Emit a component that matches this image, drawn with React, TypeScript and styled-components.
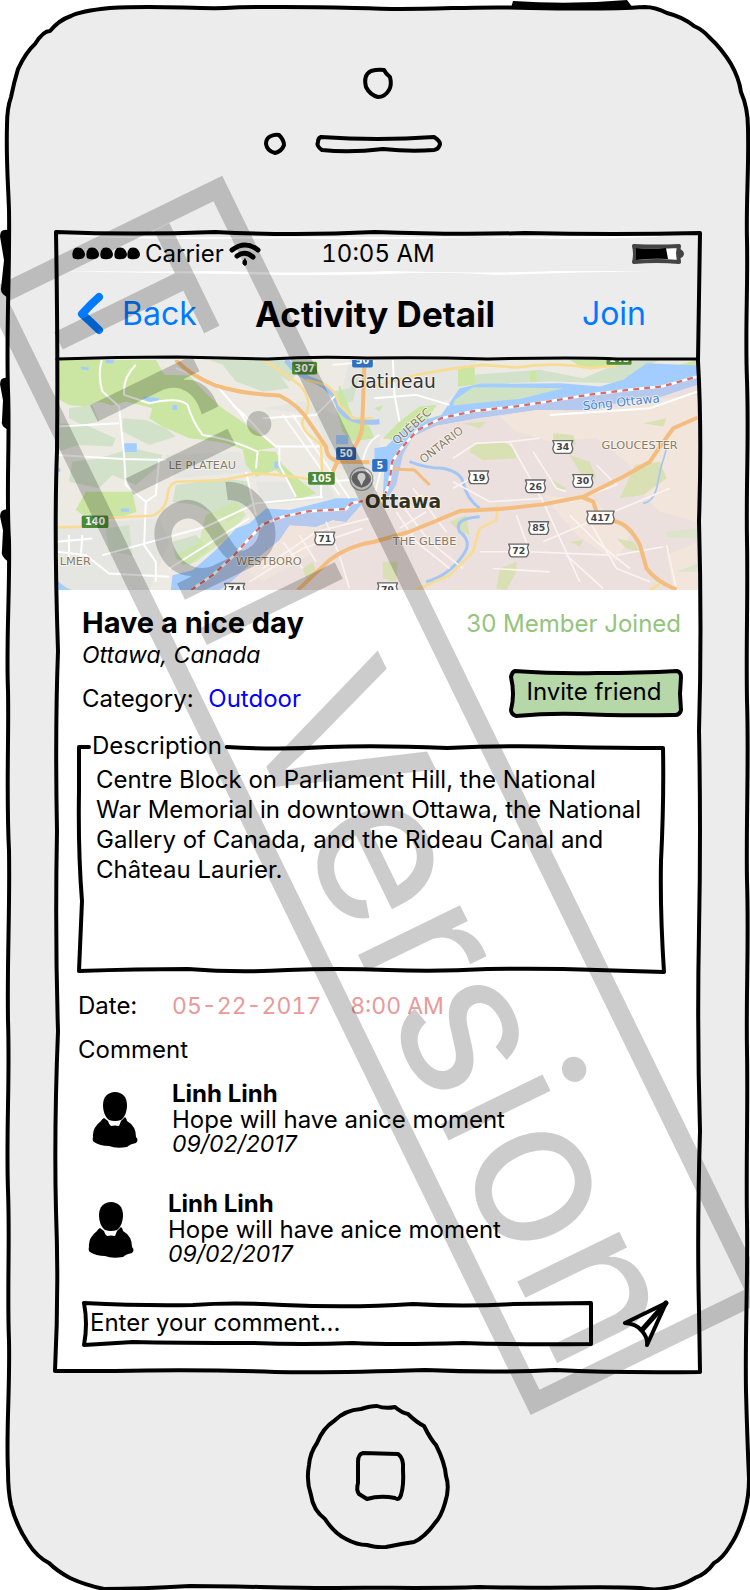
import React from "react";
import styled, { createGlobalStyle } from "styled-components";

const GlobalStyle = createGlobalStyle`
  *, *::before, *::after { box-sizing: border-box; }
  body {
    margin: 0;
    background: #fff;
    color: #000;
    font-family: Inter, "Liberation Sans", sans-serif;
    font-size: 24px;
    line-height: 30px;
  }
`;

/* ---------- sketch helpers ---------- */

const SketchSvg = styled.svg`
  position: absolute;
  inset: 0;
  width: 100%;
  height: 100%;
  overflow: visible;
  pointer-events: none;
`;

type SketchProps = { w: number; h: number; d: string; fill?: string; stroke?: number };

const Sketch = ({ w, h, d, fill = "none", stroke = 4 }: SketchProps) => (
  <SketchSvg viewBox={`0 0 ${w} ${h}`} preserveAspectRatio="none" aria-hidden="true">
    <path
      d={d}
      fill={fill}
      stroke="#000"
      strokeWidth={stroke}
      strokeLinejoin="round"
      strokeLinecap="round"
      vectorEffect="non-scaling-stroke"
    />
  </SketchSvg>
);

/* ---------- phone ---------- */

const Phone = styled.div`
  position: relative;
  isolation: isolate;
  overflow: hidden;
`;

const Shell = styled(SketchSvg)`
  z-index: -1;
`;

const Earpiece = styled.header`
  display: flex;
  justify-content: center;
  height: 231px;
`;

const Screen = styled.main`
  position: relative;
  margin: 0 50px 0 55px;
  padding: 2px;
`;

const HomeArea = styled.footer`
  display: flex;
  justify-content: center;
  padding: 30px 0 42px 6px;
`;

const HomeButton = styled.button`
  width: 146px;
  height: 146px;
  padding: 0;
  border: 0;
  background: none;
  svg { display: block; }
`;

/* ---------- bars ---------- */

const StatusBar = styled.div`
  position: relative;
  display: grid;
  grid-template-columns: 1fr auto 1fr;
  align-items: center;
  height: 42px;
  padding: 0 14px 0 15px;
  background: #ececec;
  font-variant-numeric: tabular-nums;
`;

const Signal = styled.div`
  display: flex;
  align-items: center;
  gap: 5px;
`;

const BatterySlot = styled.div`
  display: flex;
  justify-content: flex-end;
`;

const NavBar = styled.nav`
  position: relative;
  display: grid;
  grid-template-columns: 1fr auto 1fr;
  align-items: center;
  height: 85px;
  padding: 0 5px 7px 0;
  background: #ececec;
`;

const NavLink = styled.a<{ $end?: boolean }>`
  display: flex;
  align-items: center;
  gap: 17px;
  justify-self: ${(p) => (p.$end ? "end" : "start")};
  padding: ${(p) => (p.$end ? "0 47px 0 0" : "0 0 0 20px")};
  color: #007aff;
  font-size: 32px;
  line-height: 40px;
  text-decoration: none;
`;

const Title = styled.h1`
  margin: 0;
  font-size: 35px;
  line-height: 40px;
  font-weight: 700;
`;

/* ---------- content ---------- */

const MapPicture = styled.svg`
  display: block;
  width: 100%;
  height: 230px;
`;

const Body = styled.div`
  padding: 16px 15px 23px 21px;
  background: #fff;
`;

const Summary = styled.section`
  display: flex;
  justify-content: space-between;
  padding-left: 4px;
`;

const Name = styled.h2`
  margin: 0;
  font-size: 29px;
  line-height: 34px;
  font-weight: 700;
`;

const Place = styled.p`
  margin: 0 0 14px;
  font-size: 23px;
  font-style: italic;
`;

const Line = styled.p`
  margin: 0;
`;

const Category = styled.a`
  margin-left: 8px;
  color: #0000ff;
  text-decoration: none;
`;

const Side = styled.div`
  display: flex;
  flex-direction: column;
  align-items: flex-end;
`;

const Joined = styled.p`
  margin: 3px 2px 30px 0;
  color: #93c47d;
`;

const InviteButton = styled.button`
  position: relative;
  isolation: isolate;
  width: 174px;
  height: 48px;
  padding: 0 4px 3px 0;
  border: 0;
  background: none;
  color: #000;
  font: inherit;
  svg { z-index: -1; }
`;

const DescriptionFrame = styled.div`
  position: relative;
  height: 242px;
  margin: 14px 19px 0 0;
`;

const Description = styled.fieldset`
  min-width: 0;
  margin: 0;
  padding: 4px 22px 0 18px;
  border: 0;
`;

const Legend = styled.legend`
  margin-left: -4px;
  padding: 0;
`;

const DateRow = styled.dl`
  display: flex;
  gap: 29px;
  margin: 18px 0 0;
  font-variant-numeric: tabular-nums;
  dt { width: 65px; }
  dd { margin: 0; font-size: 23px; color: #ea9999; }
`;

const SectionTitle = styled.h3`
  margin: 14px 0 0;
  font-size: 24px;
  line-height: 30px;
  font-weight: 400;
`;

const Comments = styled.ul`
  display: flex;
  flex-direction: column;
  gap: 34px;
  margin: 16px 0 33px;
  padding: 0;
  list-style: none;
`;

const Comment = styled.li<{ $indent: number }>`
  display: flex;
  gap: 34px;
  padding-left: ${(p) => p.$indent}px;
  line-height: 25px;
`;

const Avatar = styled.svg`
  flex: none;
  width: 46px;
  height: 56px;
  margin-top: 11px;
`;

const Author = styled.div`
  line-height: 26px;
  font-weight: 700;
`;

const Stamp = styled.time`
  display: block;
  font-size: 23px;
  font-style: italic;
`;

const Composer = styled.form`
  display: flex;
  align-items: center;
  gap: 30px;
  padding: 0 14px 0 5px;
`;

const InputWrap = styled.div`
  position: relative;
  flex: 1;
`;

const CommentInput = styled.input`
  display: block;
  width: 100%;
  height: 44px;
  padding: 0 7px 3px;
  border: 0;
  outline: 0;
  background: transparent;
  color: #000;
  font: inherit;
  &::placeholder { color: #000; opacity: 1; }
`;

const SendButton = styled.button`
  width: 46px;
  height: 48px;
  padding: 0;
  border: 0;
  background: none;
  svg { display: block; }
`;

const Watermark = styled.svg`
  position: absolute;
  inset: 0;
  width: 100%;
  height: 100%;
  pointer-events: none;
`;

/* ---------- drawings ---------- */

const PhoneShell = () => (
  <Shell viewBox="0 0 750 1590" preserveAspectRatio="none" aria-hidden="true">
    <g fill="#000">
      <path d="M511 8 L513 1 Q570 5 627 0 L633 8Z" />
      <path d="M9 230 Q0 228 0 236 L4 260 L1 288 Q0 294 9 298Z" />
      <path d="M9 378 Q0 376 0 384 L3 400 L2 420 Q0 426 9 430Z" />
      <path d="M9 509 Q0 508 0 516 L3 530 L2 550 Q0 556 9 562Z" />
    </g>
    <path
      d="M110 8 C160 5 190 9 225 8 C290 5 340 8 400 9 C450 9 480 6 530 8 C580 9 615 9 645 7 Q655 7 667 13 Q683 17 694 26 Q703 30 709 37 Q722 49 731 64 Q739 78 741 92 Q748 108 748 128 C749 170 746 200 747 240 C748 290 745 330 747 380 C749 440 746 480 747 540 C748 600 746 640 747 700 C749 760 746 820 747 880 C749 940 746 990 747 1050 C748 1110 746 1160 747 1220 C748 1280 745 1330 746 1390 Q747 1430 749 1478 Q749 1495 745 1510 Q739 1532 730 1545 Q722 1558 714 1562 Q706 1573 695 1577 Q680 1586 667 1587 Q655 1590 640 1587 C600 1585 540 1588 480 1586 C420 1588 380 1586 330 1587 C280 1587 240 1585 190 1585 Q140 1588 104 1588 Q85 1584 70 1577 Q57 1570 49 1562 Q37 1556 28 1542 Q16 1524 11 1504 Q8 1490 8 1470 C6 1430 10 1390 9 1340 C7 1290 10 1240 8 1190 C6 1130 10 1080 8 1020 C7 960 10 910 9 850 C6 790 9 740 8 690 C6 640 10 590 9 540 C6 490 10 440 8 390 C6 330 10 270 9 210 C8 180 6 160 7 125 Q7 108 11 97 Q14 82 18 69 Q26 52 35 44 Q43 31 50 31 Q59 20 71 16 Q80 11 110 8Z"
      fill="#ececec"
      stroke="#000"
      strokeWidth="4"
      strokeLinejoin="round"
    />
  </Shell>
);

const StatusDots = () => (
  <svg width="68" height="14" viewBox="0 0 68 14" aria-hidden="true">
    {[0, 14, 28, 42, 55].map((x) => (
      <path key={x} d={`M${x + 3} 1 Q${x + 6} 0 ${x + 9} 1 Q${x + 13} 4 ${x + 13} 8 Q${x + 12} 12 ${x + 8} 12 Q${x + 4} 13 ${x + 1} 11 Q${x - 1} 5 ${x + 3} 1Z`} />
    ))}
  </svg>
);

const WifiIcon = () => (
  <svg width="32" height="24" viewBox="0 0 32 24" fill="none" stroke="#000" strokeLinecap="round" aria-hidden="true">
    <path d="M3 8 Q16 -2 29 8" strokeWidth="5" />
    <path d="M8 14 Q16 8 24 15" strokeWidth="5" />
    <path d="M16 17 Q19 20 17 23 Q15 24 14 22 Q13 19 16 17Z" fill="#000" strokeWidth="1" />
  </svg>
);

const BatteryIcon = () => (
  <svg width="52" height="20" viewBox="0 0 52 20" aria-hidden="true">
    <path d="M48 5 Q52 7 52 10 Q51 14 48 14Z" fill="#444" />
    <path d="M2 2 Q25 3 47 2 L46 9 L47 18 Q25 16 2 18 Q4 10 2 2Z" fill="#fff" stroke="#444" strokeWidth="4" strokeLinejoin="round" />
    <path d="M4 4 Q20 5 34 4 L36 15 Q20 14 4 16Z" />
  </svg>
);

const BackIcon = () => (
  <svg width="28" height="44" viewBox="0 0 28 44" fill="none" stroke="#007aff" strokeWidth="8" strokeLinecap="round" aria-hidden="true">
    <path d="M22 5 Q14 12 5 22 Q14 30 22 38" strokeLinejoin="round" />
  </svg>
);

const Person = () => (
  <Avatar viewBox="0 0 46 56" role="img" aria-label="Linh Linh">
    <path d="M23 0 C30 0 35 5 35 13 C35 19 33 25 29 28 Q23 30 17 28 C13 25 11 19 11 13 C11 5 16 0 23 0Z" />
    <path d="M12 26 L16 29 Q17 33 19 34 Q23 33 27 34 L29 29 L33 25 Q35 27 35 29 Q44 34 44 45 Q47 48 44 51 Q38 52 35 55 Q24 57 17 54 Q8 54 2 50 Q0 49 1 45 Q0 36 9 29 Q10 27 12 26Z" />
  </Avatar>
);

const PaperPlane = () => (
  <svg width="46" height="48" viewBox="0 0 46 48" fill="none" stroke="#000" strokeWidth="4" strokeLinejoin="round" strokeLinecap="round" aria-hidden="true">
    <path d="M43 3 L2 23 Q14 24 19 31 Q25 38 24 45 L43 3Z" />
    <path d="M43 3 L19 30" strokeWidth="5" />
  </svg>
);

const Shield = ({ x, y, w = 60, children }: { x: number; y: number; w?: number; children: string }) => (
  <g>
    <path d={`M${x} ${y} h${w} l-4 10 l4 14 q-3 14 -10 14 h${20 - w} q-7 0 -10 -14 l4 -14Z`} fill="#fff" stroke="#666" strokeWidth="4" />
    <text x={x + w / 2} y={y + 29} textAnchor="middle" fontSize="28" fontWeight="700" fill="#444">{children}</text>
  </g>
);

const Plate = ({ x, y, w, fill, children }: { x: number; y: number; w: number; fill: string; children: string }) => (
  <g>
    <rect x={x} y={y} width={w} height="38" rx="5" fill={fill} />
    <text x={x + w / 2} y={y + 29} textAnchor="middle" fontSize="29" fontWeight="700" fill="#fff">{children}</text>
  </g>
);

const OttawaMap = () => (
  <MapPicture
    viewBox="24 15 1920 690"
    preserveAspectRatio="xMidYMid slice"
    role="img"
    aria-label="Map of Ottawa"
    fontFamily='"DejaVu Sans", sans-serif'
    strokeLinejoin="round"
  >
    <rect x="0" y="0" width="1980" height="720" fill="#edeae3" />
    {/* built-up ground */}
    <g fill="#e5e5e2">
      <path d="M640 160 L800 180 L850 330 L990 400 L990 15 L900 15 L860 180 L760 140Z" />
      <path d="M24 520 L180 500 L330 490 L360 560 L300 705 L24 705Z" />
      <path d="M350 300 L570 290 L610 350 L380 370Z" />
      <path d="M970 15 L1280 15 L1270 80 L1100 200 L970 260Z" />
      <path d="M620 380 L830 380 L860 430 L640 450Z" />
    </g>
    {/* light woods */}
    <g fill="#d2e2ca">
      <path d="M60 160 L130 150 L150 200 L100 210 L60 190Z M24 205 L110 210 L200 250 L190 275 L90 270 L24 290Z M220 190 L290 195 L350 220 L380 245 L300 270 L220 230Z M250 280 L340 300 L320 340 L260 390 L190 360 L150 400 L60 380 L70 320 L150 310Z" />
      <path d="M380 390 L520 370 L600 380 L610 440 L540 500 L440 450 L370 440Z M480 15 L700 15 L690 60 L720 100 L640 110 L560 80 L520 30Z M170 520 L240 510 L250 600 L180 590Z M370 560 L440 540 L480 580 L420 630 L380 610Z" />
      <path d="M700 15 L740 60 L720 80 L650 40Z M850 110 L900 100 L930 60 L910 140 L870 150Z" />
      <path d="M1270 60 L1470 45 L1600 70 L1720 20 L1830 15 L1700 85 L1500 80 L1260 90Z M1220 130 L1300 100 L1530 105 L1410 135 L1210 155Z" />
    </g>
    {/* parks */}
    <g fill="#cae6a2">
      <path d="M24 15 L320 15 L345 60 L420 62 L470 115 L520 160 L600 215 L640 245 L680 277 L600 290 L530 265 L470 255 L420 250 L340 215 L300 190 L310 160 L230 140 L190 152 L150 140 L110 155 L60 150 L24 130Z" />
      <path d="M580 285 L680 290 L700 330 L750 375 L800 415 L740 435 L715 375 L680 345 L620 365 L590 330Z" />
      <path d="M80 465 L110 410 L250 410 L262 470 L220 485 L100 478Z" />
      <path d="M470 480 L560 440 L590 480 L520 560 L440 620 L400 630 L380 600 L450 560Z" opacity=".7" />
      <path d="M870 90 L910 185 L960 215 L975 250 L910 260 L880 230 L860 160Z M1225 35 L1275 35 L1275 90 L1225 95Z M1110 155 L1160 150 L1130 200 L1060 260 L1000 250 L1050 200Z M1440 50 L1460 50 L1460 80 L1440 80Z" />
      <path d="M1560 15 L1740 15 L1700 35 L1600 40Z M1850 40 L1943 15 L1943 35 L1860 60Z M975 160 L1000 150 L990 170Z" />
    </g>
    {/* Ontario side */}
    <path d="M500 705 L600 620 L720 500 L850 500 L940 430 L1020 425 L1045 290 L1120 215 L1290 172 L1480 160 L1640 140 L1830 110 L1943 80 L1943 705Z" fill="#ebe0dd" />
    <g fill="#f2e5db">
      <path d="M1350 185 L1480 160 L1600 175 L1850 130 L1943 120 L1943 500 L1830 470 L1760 400 L1740 330 L1640 250 L1500 260 L1400 230Z" />
      <path d="M1480 420 L1640 440 L1740 540 L1700 620 L1580 540Z M1850 600 L1943 560 L1943 705 L1870 705Z" />
      <path d="M700 520 L830 490 L780 600 L640 680 L580 640Z" opacity=".7" />
    </g>
    <g fill="#d9e0b4">
      <path d="M1510 235 L1570 240 L1580 270 L1510 260Z M1265 270 L1360 260 L1390 280 L1400 310 L1300 315 L1260 290Z M1560 300 L1620 320 L1640 370 L1600 370Z M1755 330 L1830 320 L1850 370 L1780 420 L1710 430Z M1500 370 L1550 400 L1530 405Z M1200 500 L1250 480 L1260 540 L1230 530Z" />
      <path d="M1350 640 L1400 620 L1400 650 L1370 705 L1340 700Z M1000 620 L1045 620 L1040 680 L1000 670Z M760 640 L790 620 L800 650 L770 670Z M1700 550 L1750 560 L1770 590 L1730 580Z M1780 205 L1850 190 L1840 215Z M1240 205 L1310 200 L1290 220Z M1560 560 L1600 555 L1590 575Z" />
      <path d="M1850 530 L1943 520 L1943 550 L1850 545Z M1880 650 L1943 625 L1943 650Z" fill="#dce4cc" />
    </g>
    {/* water */}
    <g fill="#a3ccff">
      <path d="M365 705 L370 660 L430 645 L500 585 L560 520 L600 505 L650 460 L720 465 L800 445 L860 430 L925 430 L935 450 L890 500 L850 495 L800 515 L720 510 L690 555 L610 620 L550 675 L510 705Z" />
      <path d="M975 280 L1010 275 L1065 220 L1125 195 L1175 180 L1230 100 L1290 87 L1535 85 L1650 95 L1720 75 L1790 25 L1943 32 L1943 85 L1835 125 L1775 130 L1600 165 L1455 165 L1280 190 L1160 212 L1090 240 L1060 290 L1045 330 L1030 400 L1015 430 L1000 420 L1005 330 L975 310Z" />
      <path d="M280 125 L330 130 L325 142 L290 138Z M370 150 h14 v15 h-14Z M225 265 h38 v26 h-38Z M95 35 L120 38 L118 46 L98 44Z M215 460 h25 v10 h-25Z M170 15 h24 v10 h-24Z M675 320 h15 v20 h-15Z M24 340 h10 v10 h-10Z" />
      <path d="M24 675 Q50 700 70 705 L24 705Z M860 240 h36 v28 h-36Z" />
    </g>
    <g fill="#b5c8ee">
      <path d="M430 705 L490 662 L600 555 L645 508 L700 487 L780 470 L890 465 L930 445 L890 500 L850 495 L800 515 L720 510 L690 555 L610 620 L550 675 L510 705Z" />
      <path d="M1943 65 L1835 96 L1735 106 L1615 122 L1495 142 L1395 157 L1275 170 L1175 192 L1105 227 L1055 283 L1030 325 L1020 420 L1040 390 L1060 300 L1090 245 L1160 212 L1280 190 L1455 165 L1600 165 L1775 130 L1835 125 L1943 90Z" />
    </g>
    <path d="M1215 135 L1270 97 L1540 100 L1410 132 L1210 152Z" fill="#cfe2c4" />
    <g fill="none" stroke="#a3c6f5" strokeWidth="9">
      <path d="M710 15 Q740 60 800 80 Q850 100 870 160 Q900 210 990 200" strokeWidth="16" />
      <path d="M1080 320 Q1130 340 1180 340 Q1230 350 1240 380 Q1250 430 1290 460 M1290 485 Q1210 490 1230 530 Q1270 560 1240 600 Q1200 660 1130 680" />
      <path d="M1850 280 Q1830 340 1820 400 Q1810 440 1780 445" strokeWidth="5" />
    </g>
    {/* streets */}
    <g fill="none" stroke="#fff" strokeWidth="6">
      <path d="M158 15 Q145 60 160 110 L210 155 L225 300 L230 390 L290 440 L320 420 L330 310" />
      <path d="M260 30 Q220 70 225 120 L300 145 Q390 125 415 150 Q430 200 460 240 Q530 250 590 275 L625 290 L620 340" />
      <path d="M24 215 L210 205 M24 300 L220 312 L350 315 M290 440 L285 570 L320 620 L320 680 M24 590 L110 600 L180 655 L360 665" />
      <path d="M160 600 L470 515 L620 445 L820 425 M360 640 L600 490 M550 150 Q600 190 640 240 L680 275 L830 275 M640 190 L800 180 L860 120" />
      <path d="M690 270 L690 330 L740 425 M815 380 L815 430 M590 350 L620 480 M830 380 L975 370 M500 90 L570 170 L590 200" />
      <path d="M1030 15 L1035 120 L1050 200 M975 130 L1100 120 L1200 150 M60 540 L60 620 M100 540 L95 610 M24 560 L130 550 M1943 110 L1800 160 L1500 180" />
      <path d="M700 180 L870 420 M730 180 L900 430 M940 320 Q950 260 990 240 M975 420 L1000 320 M380 40 L560 110 M850 30 L975 20" opacity=".8" />
    </g>
    <g fill="none" stroke="#fbf3f1" strokeWidth="5">
      <path d="M1380 260 L1480 440 L1590 680 M1450 290 L1520 400 L1550 410 M1640 330 L1700 390 L1560 440 M1210 310 L1280 265 L1380 260 L1470 250" />
      <path d="M1040 470 L1100 560 L1200 640 M1065 460 L1140 560 L1240 640 M1090 400 L1190 530 M1050 520 L1130 470 M1060 550 L1160 490" />
      <path d="M1210 380 L1320 440 L1480 430 M1480 560 L1620 500 L1860 400 M1400 480 L1440 590 L1680 600 M1290 590 L1440 590 M1330 640 L1500 650 M1620 500 L1700 640 L1800 680 M1640 560 L1740 640 M1550 600 L1660 700" />
      <path d="M640 640 L800 530 L960 490 M700 560 L760 640 M750 540 L800 620 M830 500 L870 600 L900 700 M600 680 L760 580 L940 520 M1850 570 L1880 705 M1700 600 L1840 575 M1560 480 L1640 560 M1300 350 L1210 400 M1120 420 L1060 440" />
    </g>
    {/* arterials */}
    <g fill="none" stroke="#f8dc94" strokeWidth="8">
      <path d="M24 517 L100 515 M180 488 L310 482 Q350 465 355 420 Q360 375 400 380 L520 375 L620 355 L690 360 L780 372" />
      <path d="M640 15 Q700 50 750 90 Q790 130 770 180 Q740 210 790 250 L825 275 M815 270 L818 360 M770 75 L830 90 Q860 110 870 150 L910 190 L970 190" />
      <path d="M975 95 L1100 60 Q1200 40 1300 30 L1400 38 Q1520 20 1620 40 L1700 32 M1100 703 L1200 660 L1270 590 L1290 520 L1340 495 L1345 450 M1800 705 L1830 685" />
    </g>
    <g fill="none" stroke="#f4bd7e" strokeWidth="12">
      <path d="M380 15 Q420 60 500 92 Q580 118 690 122 Q750 150 785 210 L830 275 Q830 310 865 318 L850 350 M945 20 L938 220 Q930 260 905 290 L870 320 L960 322" />
      <path d="M745 705 L840 615 Q900 570 975 560 L1080 530 L1230 468 L1350 462 L1480 448 L1600 425 L1720 365 L1800 320 Q1840 260 1870 220 L1943 188" />
      <path d="M1600 428 L1630 440 L1645 485 L1700 500 Q1740 510 1770 570 L1790 640 Q1820 680 1880 703" />
      <path d="M1030 342 L1095 345 L1140 390" strokeWidth="9" />
    </g>
    {/* provincial border */}
    <g fill="none" stroke="#fff" strokeWidth="8">
      <path d="M425 705 L490 660 L550 605 L600 550 L640 508 L700 485 L780 468 L890 462 L905 445 L940 438" />
      <path d="M1005 425 L1020 380 L1028 320 L1055 280 L1105 225 L1175 190 L1275 168 L1395 155 L1495 140 L1615 120 L1735 105 L1835 95 L1943 65" />
    </g>
    <g fill="none" stroke="#d96a64" strokeWidth="7" strokeDasharray="17 16">
      <path d="M425 705 L490 660 L550 605 L600 550 L640 508 L700 485 L780 468 L890 462 L905 445 L940 438" />
      <path d="M1005 425 L1020 380 L1028 320 L1055 280 L1105 225 L1175 190 L1275 168 L1395 155 L1495 140 L1615 120 L1735 105 L1835 95 L1943 65" />
    </g>
    {/* road numbers */}
    <Plate x={728} y={21} w={75} fill="#4c8a35">307</Plate>
    <Plate x={98} y={481} w={80} fill="#4c8a35">140</Plate>
    <Plate x={776} y={351} w={80} fill="#4c8a35">105</Plate>
    <Plate x={1670} y={-8} w={75} fill="#4c8a35">148</Plate>
    <Plate x={908} y={0} w={62} fill="#2d70c4">50</Plate>
    <Plate x={860} y={277} w={60} fill="#2d65b0">50</Plate>
    <Plate x={968} y={312} w={46} fill="#2d70c4">5</Plate>
    <Shield x={796} y={531}>71</Shield>
    <Shield x={526} y={685}>74</Shield>
    <Shield x={984} y={683}>79</Shield>
    <Shield x={1257} y={348}>19</Shield>
    <Shield x={1427} y={375}>26</Shield>
    <Shield x={1509} y={257}>34</Shield>
    <Shield x={1569} y={359}>30</Shield>
    <Shield x={1611} y={468} w={82}>417</Shield>
    <Shield x={1437} y={500}>85</Shield>
    <Shield x={1377} y={567}>72</Shield>
    {/* place marker */}
    <circle cx="936" cy="372" r="34" fill="#e8e8e8" stroke="#999" strokeWidth="4" />
    <path d="M906 372 A30 24 0 1 1 966 372 Q960 392 936 398 Q912 392 906 372Z" fill="#777" />
    <circle cx="936" cy="366" r="12" fill="#fff" />
    <path d="M928 374 L936 392 L944 374Z" fill="#fff" />
    {/* place names */}
    <g stroke="#fff" strokeWidth="5" paintOrder="stroke" strokeOpacity=".7">
      <text x="904" y="99" fontSize="56" fill="#333">Gatineau</text>
      <text x="946" y="459" fontSize="56" fontWeight="700" fill="#333322">Ottawa</text>
      <g fontSize="34" fill="#877a60">
        <text x="358" y="341">LE PLATEAU</text>
        <text x="32" y="629">LMER</text>
        <text x="560" y="629">WESTBORO</text>
        <text x="1030" y="569">THE GLEBE</text>
        <text x="1655" y="282">GLOUCESTER</text>
        <text transform="translate(1042 270) rotate(-42)">QUÉBEC</text>
        <text transform="translate(1122 326) rotate(-38)">ONTARIO</text>
      </g>
      <text transform="translate(1600 166) rotate(-6)" fontSize="36" fill="#4a86cf">Sông Ottawa</text>
    </g>
  </MapPicture>
);

/* ---------- page ---------- */

const comments = [
  { author: "Linh Linh", text: "Hope will have anice moment", date: "09/02/2017", iso: "2017-02-09", indent: 14 },
  { author: "Linh Linh", text: "Hope will have anice moment", date: "09/02/2017", iso: "2017-02-09", indent: 10 },
];

export default function App() {
  return (
    <>
      <GlobalStyle />
      <Phone>
        <PhoneShell />
        <Earpiece>
          <svg width="230" height="231" viewBox="260 0 230 231" fill="none" stroke="#000" strokeWidth="4" strokeLinejoin="round" aria-hidden="true">
            <path d="M371 71 Q378 69 384 70 Q386 74 390 77 Q392 85 389 90 Q385 97 378 97 Q370 95 366 87 Q363 75 371 71Z" />
            <path d="M271 136 Q275 134 279 135 Q284 140 284 145 Q282 151 275 153 Q267 151 266 144 Q266 138 271 136Z" />
            <path d="M321 137 Q378 141 434 137 Q440 141 440 144 Q439 149 434 150 Q410 152 383 149 Q350 153 322 150 Q316 146 318 142 Q318 138 321 137Z" />
          </svg>
        </Earpiece>

        <Screen>
          <StatusBar>
            <Signal>
              <StatusDots />
              <span>Carrier</span>
              <WifiIcon />
            </Signal>
            <span>10:05 AM</span>
            <BatterySlot>
              <BatteryIcon />
            </BatterySlot>
            <SketchSvg viewBox="0 0 640 43" preserveAspectRatio="none" aria-hidden="true">
              <path d="M2 3 Q120 5 230 4 Q330 4 420 4 Q500 4 600 2 L600 4 Q500 8 420 4 Q320 8 230 5 Q120 8 2 3Z" fill="#fff" />
              <path d="M2 39 Q80 40 160 39 Q260 42 330 39 Q420 42 500 39 L590 39 Q500 41 440 43 Q380 39 330 42 Q240 44 180 42 Q80 41 2 39Z" fill="#fff" />
            </SketchSvg>
          </StatusBar>
          <NavBar>
            <NavLink href="#back">
              <BackIcon />
              Back
            </NavLink>
            <Title>Activity Detail</Title>
            <NavLink href="#join" $end>Join</NavLink>
            <Sketch w={640} h={85} stroke={3} d="M0 84 Q60 82 120 82 Q170 83 210 84 Q260 81 310 83 Q370 82 430 84 Q520 82 560 84 L640 84" />
          </NavBar>
          <OttawaMap />
          <Body>
            <Summary>
              <div>
                <Name>Have a nice day</Name>
                <Place>Ottawa, Canada</Place>
                <Line>
                  Category: <Category href="#outdoor">Outdoor</Category>
                </Line>
              </div>
              <Side>
                <Joined>30 Member Joined</Joined>
                <InviteButton type="button">
                  <Sketch w={174} h={48} fill="#b6d7a8" d="M6 2 Q50 5 88 4 Q130 4 168 2 Q172 3 172 8 L171 25 L172 41 Q171 46 166 46 Q110 47 70 45 Q40 44 7 47 Q2 45 2 41 Q6 25 2 8 Q3 3 6 2Z" />
                  Invite friend
                </InviteButton>
              </Side>
            </Summary>

            <DescriptionFrame>
              <Sketch w={587} h={242} d="M11 16 L1 16 L1 60 Q0 120 4 170 L1 240 Q60 238 110 238 Q160 242 210 239 Q260 237 310 239 Q360 241 410 238 Q470 237 520 239 L587 241 Q583 180 584 130 Q587 70 586 17 Q540 17 490 16 Q430 14 370 17 Q300 14 250 16 Q200 19 149 16" />
              <Description>
                <Legend>Description</Legend>
                Centre Block on Parliament Hill, the National War Memorial in downtown Ottawa, the National Gallery of Canada, and the Rideau Canal and Château Laurier.
              </Description>
            </DescriptionFrame>

            <DateRow>
              <dt>Date:</dt>
              <dd>05-22-2017</dd>
              <dd>8:00 AM</dd>
            </DateRow>

            <SectionTitle>Comment</SectionTitle>
            <Comments>
              {comments.map((c, i) => (
                <Comment key={i} $indent={c.indent}>
                  <Person />
                  <div>
                    <Author>{c.author}</Author>
                    <div>{c.text}</div>
                    <Stamp dateTime={c.iso}>{c.date}</Stamp>
                  </div>
                </Comment>
              ))}
            </Comments>

            <Composer>
              <InputWrap>
                <Sketch w={510} h={44} d="M1 1 Q60 4 110 3 Q150 0 200 3 Q270 6 330 2 Q380 5 430 2 L508 1 L508 42 Q440 43 380 41 Q310 43 270 41 Q220 43 170 41 Q90 41 50 40 L1 43 Q5 22 1 1Z" />
                <CommentInput type="text" aria-label="Comment" placeholder="Enter your comment..." />
              </InputWrap>
              <SendButton type="submit" aria-label="Send">
                <PaperPlane />
              </SendButton>
            </Composer>
          </Body>
          <Sketch w={645} h={1142} d="M1 1 Q80 4 160 1 Q240 5 320 1 Q400 4 470 2 Q560 4 645 2 L643 130 Q647 200 644 290 Q647 400 644 500 Q646 600 644 700 Q642 800 645 900 Q642 1000 644 1080 L645 1141 Q560 1142 500 1139 Q440 1142 370 1139 Q280 1142 220 1141 Q140 1138 60 1140 L0 1140 Q4 1060 1 980 Q-1 900 3 800 Q0 700 2 600 Q0 500 3 420 Q-1 300 2 220 Q3 120 1 1Z" />
        </Screen>

        <HomeArea>
          <HomeButton type="button" aria-label="Home">
            <svg width="146" height="146" viewBox="0 0 146 146" fill="none" stroke="#000" strokeWidth="4" strokeLinejoin="round" aria-hidden="true">
              <path d="M56 6 Q65 3 72 3 Q80 6 90 4 Q97 10 103 11 Q111 19 119 23 Q126 37 131 42 Q140 60 141 73 Q145 85 140 100 Q136 114 130 120 Q120 134 109 139 Q95 141 81 144 Q73 145 62 142 Q52 142 41 136 Q29 130 20 116 Q8 107 6 92 Q1 78 4 62 Q5 50 12 40 Q18 25 29 18 Q40 7 56 6Z" />
              <path d="M58 50 L93 51 Q99 55 98 67 Q99 82 96 92 Q94 98 90 95 Q75 92 62 96 L54 91 Q51 87 53 80 L53 59 Q53 51 58 50Z" />
            </svg>
          </HomeButton>
        </HomeArea>

        <Watermark viewBox="0 0 750 1590" aria-hidden="true">
          <g transform="translate(222 176) rotate(64)" opacity=".196">
            <rect x="9" y="9" width="1230" height="247" fill="none" stroke="#000" strokeWidth="19" />
            <text x="9" y="219" fontFamily='Inter, "Liberation Sans", sans-serif' fontSize="208">Trial Version</text>
          </g>
        </Watermark>
      </Phone>
    </>
  );
}
